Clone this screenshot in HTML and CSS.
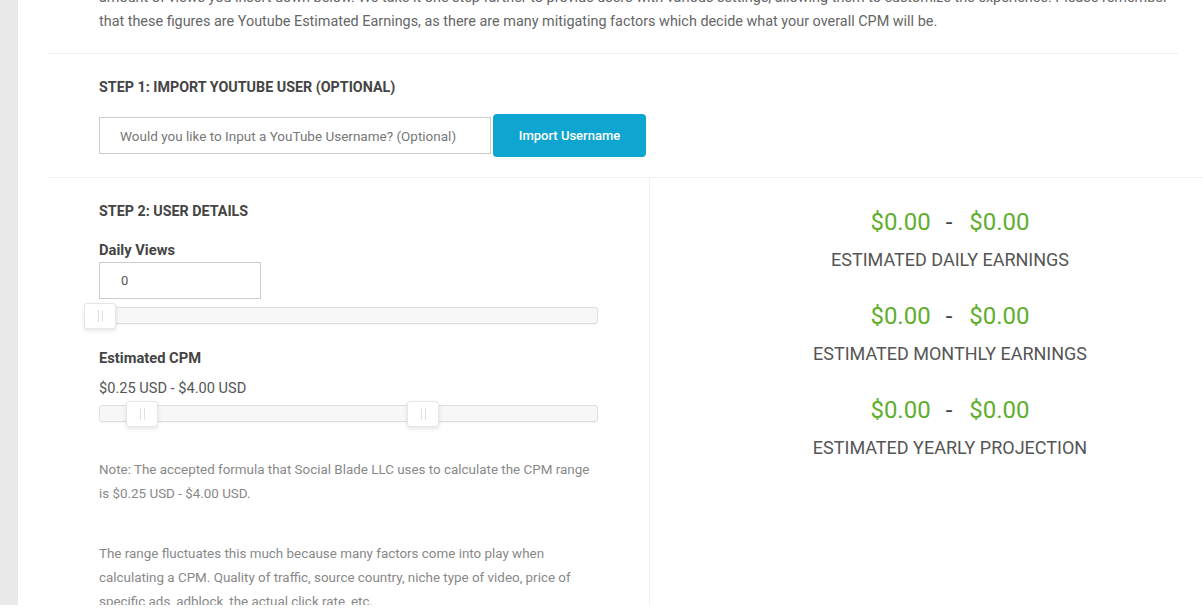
FILE: index.html
```html
<!DOCTYPE html>
<html>
<head>
<meta charset="utf-8">
<link rel="stylesheet" href="styles.css">
</head>
<body>
<div class="page">
  <div class="sidebar"></div>
  <div class="main">
    <p class="intro">amount of views you insert down below. We take it one step farther to provide users with various settings, allowing them to customize the experience. Please remember that these figures are Youtube Estimated Earnings, as there are many mitigating factors which decide what your overall CPM will be.</p>

    <section class="step1">
      <h3 class="step-title">STEP 1: IMPORT YOUTUBE USER (OPTIONAL)</h3>
      <div class="import-row">
        <input class="user-input" type="text" placeholder="Would you like to Input a YouTube Username? (Optional)">
        <button class="import-btn">Import Username</button>
      </div>
    </section>

    <section class="step2">
      <div class="details">
        <h3 class="step-title">STEP 2: USER DETAILS</h3>
        <label class="field-label">Daily Views</label>
        <input class="views-input" type="text" value="0">
        <div class="slider slider-views">
          <span class="handle" style="left:0%"><i></i></span>
        </div>

        <label class="field-label cpm-label">Estimated CPM</label>
        <div class="cpm-range">$0.25 USD - $4.00 USD</div>
        <div class="slider slider-cpm">
          <span class="handle" style="left:8.5%"><i></i></span>
          <span class="handle" style="left:65%"><i></i></span>
        </div>

        <p class="note">Note: The accepted formula that Social Blade LLC uses to calculate the CPM range is $0.25 USD - $4.00 USD.</p>
        <p class="note note-2">The range fluctuates this much because many factors come into play when calculating a CPM. Quality of traffic, source country, niche type of video, price of specific ads, adblock, the actual click rate, etc.</p>
      </div>

      <div class="results">
        <div class="result">
          <div class="amount"><span>$0.00</span><span class="dash">-</span><span>$0.00</span></div>
          <div class="result-label">ESTIMATED DAILY EARNINGS</div>
        </div>
        <div class="result">
          <div class="amount"><span>$0.00</span><span class="dash">-</span><span>$0.00</span></div>
          <div class="result-label">ESTIMATED MONTHLY EARNINGS</div>
        </div>
        <div class="result">
          <div class="amount"><span>$0.00</span><span class="dash">-</span><span>$0.00</span></div>
          <div class="result-label">ESTIMATED YEARLY PROJECTION</div>
        </div>
      </div>
    </section>
  </div>
</div>
</body>
</html>
```

FILE: styles.css
```css
* { box-sizing: border-box; }

html, body {
  margin: 0;
  padding: 0;
  background: #fff;
}

body {
  font-family: Roboto, "Liberation Sans", Arial, sans-serif;
  color: #555;
}

.page {
  display: flex;
  height: 605px;
  overflow: hidden;
}

.sidebar {
  width: 18px;
  flex: 0 0 18px;
  background: #e9e9e9;
}

.main {
  flex: 1;
  padding-left: 30px;
  min-width: 0;
}

.intro {
  margin: -14px 0 0 0;
  padding: 0 0 19px 51px;
  width: 1130px;
  font-size: 14.4px;
  line-height: 24px;
  color: #666;
  border-bottom: 1px solid #efefef;
}

.step-title {
  margin: 0;
  font-size: 14.3px;
  line-height: 20px;
  font-weight: 700;
  color: #444;
}

.step1 {
  padding: 23px 0 20px 51px;
  border-bottom: 1px solid #efefef;
}

.step1 .step-title {
  margin-bottom: 17px;
}

.import-row {
  display: flex;
  align-items: center;
  gap: 2px;
}

.user-input {
  width: 392px;
  height: 37px;
  border: 1px solid #ccc;
  padding: 0 0 0 20px;
  font-family: inherit;
  font-size: 13.5px;
  color: #555;
  outline: none;
}

.user-input::placeholder {
  color: #777;
}

.import-btn {
  width: 153px;
  height: 43px;
  border: 0;
  border-radius: 4px;
  background: #0fa5d1;
  color: #fff;
  font-family: inherit;
  font-size: 13px;
  font-weight: 500;
  padding: 0;
}

.step2 {
  display: flex;
}

.details {
  width: 602px;
  flex: 0 0 602px;
  padding: 23px 0 0 51px;
  border-right: 1px solid #efefef;
  display: flex;
  flex-direction: column;
  align-items: flex-start;
}

.field-label {
  display: block;
  margin-top: 19px;
  font-size: 14.7px;
  line-height: 20px;
  font-weight: 700;
  color: #444;
}

.cpm-label {
  margin-top: 24px;
}

.views-input {
  margin-top: 2px;
  width: 162px;
  height: 37px;
  border: 1px solid #ccc;
  padding: 0 0 0 21px;
  font-family: inherit;
  font-size: 13px;
  color: #555;
  outline: none;
}

.slider {
  position: relative;
  width: 499px;
  height: 17px;
  border: 1px solid #dedede;
  border-radius: 3px;
  background: #f7f7f7;
  box-shadow: 0 1px 1px rgba(0,0,0,0.04);
}

.slider-views {
  margin-top: 8px;
}

.cpm-range {
  margin-top: 10px;
  font-size: 14.6px;
  line-height: 20px;
  color: #555;
}

.slider-cpm {
  margin-top: 7px;
}

.handle {
  position: absolute;
  top: -5px;
  margin-left: -16px;
  width: 32px;
  height: 26px;
  background: #fff;
  border: 1px solid #e6e6e6;
  border-radius: 3px;
  box-shadow: 0 2px 4px rgba(0,0,0,0.1);
}

.handle i {
  position: absolute;
  left: 13px;
  top: 6px;
  width: 5px;
  height: 12px;
  border-left: 1px solid #e0e0e0;
  border-right: 1px solid #e0e0e0;
}

.note {
  margin: 36px 0 0 0;
  width: 495px;
  font-size: 13.4px;
  line-height: 24px;
  color: #888;
}

.note-2 {
  margin-top: 36px;
}

.results {
  flex: 1;
  padding: 29px 0 0 47px;
  text-align: center;
}

.result + .result {
  margin-top: 29px;
}

.amount {
  font-size: 24px;
  line-height: 30px;
  color: #5fae2e;
}

.amount .dash {
  display: inline-block;
  margin: 0 17px 0 15px;
  color: #444;
}

.result-label {
  margin-top: 11px;
  font-size: 18px;
  line-height: 24px;
  color: #555;
}
```
